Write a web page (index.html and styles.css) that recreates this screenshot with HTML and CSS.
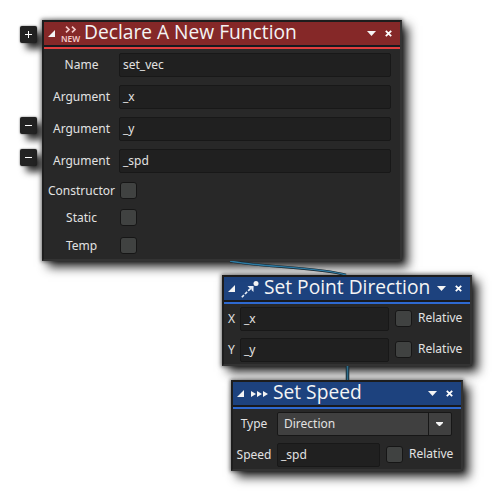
FILE: index.html
```html
<!DOCTYPE html>
<html lang="en">
<head>
<meta charset="utf-8">
<title>Function blocks</title>
<link rel="stylesheet" href="styles.css">
</head>
<body>
<main class="canvas">
  <svg class="wires" width="492" height="491" viewBox="0 0 492 491" fill="none">
    <g class="wire-edge"><path d="M230 261C258 267 320 267 346 275"/><path class="thick" d="M347.500 364V382"/></g>
    <g class="wire-core"><path d="M230 261C258 267 320 267 346 275"/><path class="thick" d="M347.500 364V382"/></g>
  </svg>
  <button class="arg-btn add"><svg viewBox="0 0 17 17"><path d="M5 8.500H12M8.500 5V12"/></svg></button>
  <button class="arg-btn remove-first"><svg viewBox="0 0 17 17"><path d="M5 8.500H12"/></svg></button>
  <button class="arg-btn remove-second"><svg viewBox="0 0 17 17"><path d="M5 8.500H12"/></svg></button>

  <section class="node declare">
    <header class="title red">
      <svg class="fold" viewBox="0 0 7 7"><path d="M7 0V7H0Z"/></svg>
      <span class="new-icon"><svg viewBox="0 0 12 7"><path d="M1 .6 4 3.500 1 6.400M7 .6 10 3.500 7 6.400"/></svg><b>NEW</b></span>
      <h1>Declare A New Function</h1>
      <svg class="menu" viewBox="0 0 9 5"><path d="M0 0H9L4.500 5Z"/></svg>
      <svg class="close" viewBox="0 0 7 7"><path d="M.8 .8 6.200 6.200M6.200 .8 .8 6.200"/></svg>
    </header>
    <div class="body">
      <div class="row"><label>Name</label><span class="input">set_vec</span></div>
      <div class="row"><label>Argument</label><span class="input">_x</span></div>
      <div class="row"><label>Argument</label><span class="input">_y</span></div>
      <div class="row"><label>Argument</label><span class="input">_spd</span></div>
      <div class="flag"><label>Constructor</label><i class="check"></i></div>
      <div class="flag"><label>Static</label><i class="check"></i></div>
      <div class="flag last"><label>Temp</label><i class="check"></i></div>
    </div>
  </section>

  <section class="node direction">
    <header class="title blue">
      <svg class="fold" viewBox="0 0 7 7"><path d="M7 0V7H0Z"/></svg>
      <svg class="point-icon" viewBox="0 0 18 17"><path class="dash" d="M.8 16.200 9 8"/><path class="tip" d="M6.500 5H12.500V11L10.500 9V7H8.500Z"/><path d="M8 9 12 5.500"/><circle cx="15" cy="2.600" r="2.500"/></svg>
      <h1>Set Point Direction</h1>
      <svg class="menu" viewBox="0 0 9 5"><path d="M0 0H9L4.500 5Z"/></svg>
      <svg class="close" viewBox="0 0 7 7"><path d="M.8 .8 6.200 6.200M6.200 .8 .8 6.200"/></svg>
    </header>
    <div class="body">
      <div class="row"><label>X</label><span class="input">_x</span><i class="check"></i><span class="relative">Relative</span></div>
      <div class="row"><label>Y</label><span class="input">_y</span><i class="check"></i><span class="relative">Relative</span></div>
    </div>
  </section>

  <section class="node speed">
    <header class="title blue">
      <svg class="fold" viewBox="0 0 7 7"><path d="M7 0V7H0Z"/></svg>
      <svg class="speed-icon" viewBox="0 0 17 6"><path d="M0 0 5 3 0 6ZM6 0 11 3 6 6ZM12 0 17 3 12 6Z"/></svg>
      <h1>Set Speed</h1>
      <svg class="menu" viewBox="0 0 9 5"><path d="M0 0H9L4.500 5Z"/></svg>
      <svg class="close" viewBox="0 0 7 7"><path d="M.8 .8 6.200 6.200M6.200 .8 .8 6.200"/></svg>
    </header>
    <div class="body">
      <div class="row"><label>Type</label><span class="select"><span>Direction</span><span class="drop"><svg viewBox="0 0 7 4"><path d="M0 0H7V1L4 4H3L0 1Z"/></svg></span></span></div>
      <div class="row"><label>Speed</label><span class="input">_spd</span><i class="check"></i><span class="relative">Relative</span></div>
    </div>
  </section>
</main>
</body>
</html>
```

FILE: styles.css
```css
* { box-sizing: border-box; }
body {
  margin: 0;
  background: #fff;
  color: #e2e2e2;
  font: 12px/16px "Noto Sans", "Open Sans", sans-serif;
  overflow: hidden;
}
.canvas { position: relative; width: 492px; height: 491px; }
svg { display: block; flex: none; fill: #f4f4f4; }

.node {
  position: absolute;
  z-index: 2;
  background: #282828;
  border: 2px solid #1d1d1d;
  border-right-color: #333;
  border-bottom-color: #333;
  box-shadow: 0 0 4px 1px rgba(0, 0, 0, .5), 6px 6px 10px rgba(0, 0, 0, .85);
}
.declare { left: 42px; top: 20px; width: 360px; height: 241px; }
.direction { left: 222px; top: 275px; width: 250px; height: 91px; z-index: 0; }
.speed { left: 231px; top: 380px; width: 232px; height: 91px; z-index: 0; }

.wires {
  position: absolute;
  left: 0;
  top: 0;
  z-index: 3;
  fill: none;
  clip-path: polygon(0 261px, 492px 261px, 492px 275px, 0 275px, 0 366px, 492px 366px, 492px 380px, 0 380px);
}
.wire-edge { stroke: #17242b; stroke-width: 2.600; }
.wire-core { stroke: #2e7ba3; stroke-width: 1.400; }
.wire-edge .thick { stroke-width: 3.500; }
.wire-core .thick { stroke: #2e6d8b; stroke-width: 1.700; }

.title {
  display: flex;
  align-items: center;
  height: 27px;
  padding: 0 8px 0 4px;
  border-bottom: 2px solid;
  box-shadow: inset 0 -2px #181a1f;
}
.red { background: #852828; border-color: #e23e3e; }
.blue { background: #1d427e; border-color: #2e69d0; }
.title h1 {
  margin: 0 auto 0 0;
  color: #f4f4f4;
  font-family: "Open Sans", "Noto Sans", sans-serif;
  font-size: 19.200px;
  font-weight: 400;
  line-height: 20px;
  white-space: nowrap;
  padding-bottom: 5px;
}
.fold { width: 7px; height: 7px; margin-bottom: 2px; }
.menu { width: 9px; height: 5px; margin: 0 9px 2px 0; }
.close { width: 7px; height: 7px; margin-bottom: 2px; stroke: #fff; stroke-width: 1.800; }
.new-icon { width: 18px; margin: 0 5px 1px 6px; color: #f3caca; }
.new-icon svg { width: 12px; height: 7px; margin: 0 0 2px 4px; fill: none; stroke: #f3caca; stroke-width: 1.700; }
.new-icon b { display: block; font-size: 8.300px; line-height: 8px; font-weight: 600; }
.point-icon { width: 18px; height: 17px; margin: 0 5px 1px 6px; }
.point-icon path { fill: none; stroke: #e8eef7; stroke-width: 1.600; }
.point-icon .dash { stroke-dasharray: 3 1.500; }
.point-icon .tip { fill: #e8eef7; stroke: none; }
.speed-icon { width: 17px; height: 6px; margin: 0 5px 2px 7px; }

.row { display: flex; align-items: center; height: 24px; }
label { text-align: center; flex: none; white-space: nowrap; }
.input {
  height: 24px;
  padding: 3px 3px;
  background: #202020;
  border: 1px solid #181818;
  border-radius: 2px;
}
.check {
  width: 17px;
  height: 17px;
  flex: none;
  background: #404241;
  border: 1px solid #161616;
  border-radius: 3px;
}
.relative { margin-left: 6px; }

.declare .body { padding-top: 4px; }
.declare .row { margin-bottom: 8px; }
.declare label { width: 75px; }
.declare .input { width: 272px; }
.flag { display: flex; align-items: center; height: 17px; margin: 0 0 10px; }
.flag.last { margin-top: 11px; }
.flag .check { margin-left: 1px; }
.row + .flag { margin-top: 9px; }

.direction .body { padding: 3px 0 0 3px; }
.direction .row + .row { margin-top: 7px; }
.direction label { width: 9px; margin-right: 4px; }
.direction .input { width: 149px; margin-right: 6px; }
.direction .row .check, .speed .row .check { margin-bottom: 1px; }
.direction .relative, .speed .relative { margin-bottom: 2px; }

.speed .body { padding-top: 3px; }
.speed .row + .row { margin-top: 7px; }
.speed label { width: 42px; margin-right: 2px; }
.speed .input { width: 103px; margin-right: 6px; }
.select {
  display: flex;
  width: 175px;
  height: 24px;
  padding-left: 6px;
  align-items: center;
  justify-content: space-between;
  background: #404040;
  border: 1px solid #171717;
  border-radius: 2px;
}
.drop {
  display: flex;
  width: 23px;
  height: 22px;
  padding-right: 1px;
  align-items: center;
  justify-content: center;
  border-left: 1px solid #171717;
}
.drop svg { width: 7px; height: 4px; }

.arg-btn {
  position: absolute;
  left: 20px;
  width: 17px;
  height: 17px;
  padding: 0;
  background: #222;
  border: 0;
  border-radius: 2px;
  box-shadow: 0 0 2px rgba(0, 0, 0, .6), 6px 6px 7px rgba(0, 0, 0, .8);
}
.arg-btn svg { width: 17px; height: 17px; stroke: #fff; }
.add { top: 26px; }
.remove-first { top: 117px; }
.remove-second { top: 149px; }
```
